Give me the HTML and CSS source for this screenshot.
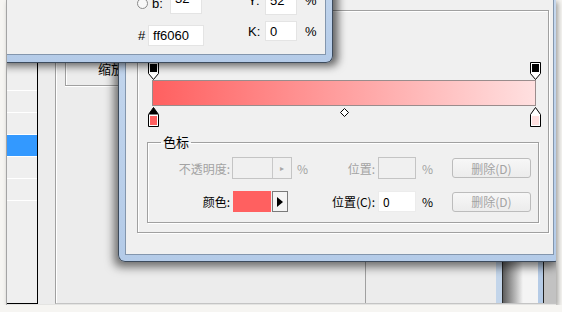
FILE: index.html
```html
<!DOCTYPE html>
<html lang="zh-CN">
<head>
  <meta charset="UTF-8">
  <title>渐变编辑器</title>
  <meta name="viewport" content="width=device-width, initial-scale=1">
  <link rel="stylesheet" href="styles.css">
</head>
<body>

<div class="shot">

  <!-- 后面的主窗口 -->
  <div class="app">
    <div class="list">
      <div class="row"></div>
      <div class="row"></div>
      <div class="row"></div>
      <div class="row selected"></div>
      <div class="row"></div>
      <div class="row"></div>
    </div>
    <div class="main">
      <div class="zoom-box">缩放</div>
      <div class="lower">
        <div class="pane-left"></div>
        <div class="pane-mid"></div>
        <div class="scroll"></div>
      </div>
    </div>
  </div>

  <!-- 渐变编辑器 -->
  <div class="dialog">
    <div class="client">
      <div class="panel">

        <div class="ramp">
          <div class="stops-top">
            <span class="stop" style="left: 0%">
              <svg width="11" height="18" viewBox="0 0 11 18"><path d="M0.5 0.5H10.5V11.5L5.5 17.5L0.5 11.5Z" fill="#fff" stroke="#000"/><rect x="2" y="2" width="7" height="8" fill="#000"/></svg>
            </span>
            <span class="stop" style="left: 100%">
              <svg width="11" height="18" viewBox="0 0 11 18"><path d="M0.5 0.5H10.5V11.5L5.5 17.5L0.5 11.5Z" fill="#fff" stroke="#000"/><rect x="2" y="2" width="7" height="8" fill="#000"/></svg>
            </span>
          </div>

          <div class="bar"></div>

          <div class="stops-bottom">
            <span class="stop" style="left: 0%">
              <svg width="11" height="20" viewBox="0 0 11 20"><path d="M5.5 0.5L10.5 7.5V19.5H0.5V7.5Z" fill="#fff" stroke="#000"/><path d="M5.5 0.5L10.5 7.5H0.5Z" fill="#000"/><rect x="2" y="9" width="7" height="9" fill="#ff6060"/></svg>
            </span>
            <span class="mid" style="left: 50%">
              <svg width="9" height="9" viewBox="0 0 9 9"><path d="M4.5 0.5L8.5 4.5L4.5 8.5L0.5 4.5Z" fill="#fff" stroke="#000"/></svg>
            </span>
            <span class="stop" style="left: 100%">
              <svg width="11" height="20" viewBox="0 0 11 20"><path d="M5.5 0.5L10.5 7.5V19.5H0.5V7.5Z" fill="#fff" stroke="#000"/><rect x="2" y="9" width="7" height="9" fill="#ffe0e0"/></svg>
            </span>
          </div>
        </div>

        <fieldset class="stops-group">
          <legend>色标</legend>
          <div class="fields">
            <span class="label off">不透明度:</span>
            <div class="spin">
              <span class="spin-field"></span>
              <span class="spin-btn">▸</span>
            </div>
            <span class="pct off">%</span>
            <span class="label off">位置:</span>
            <span class="box off"></span>
            <span class="pct off">%</span>
            <button class="btn" disabled>删除(D)</button>

            <span class="label">颜色:</span>
            <div class="color">
              <span class="swatch"></span>
              <span class="arrow">
                <svg width="6" height="10" viewBox="0 0 6 10"><path d="M0 0L6 5L0 10Z" fill="#000"/></svg>
              </span>
            </div>
            <span></span>
            <span class="label">位置(C):</span>
            <span class="box">0</span>
            <span class="pct">%</span>
            <button class="btn" disabled>删除(D)</button>
          </div>
        </fieldset>

      </div>
    </div>
  </div>

  <!-- 拾色器 -->
  <div class="picker">
    <div class="client">
      <div class="lab">
        <div class="lab-row top">
          <span class="radio"></span>
          <span class="lab-label">b:</span>
          <span class="field small">32</span>
        </div>
        <div class="lab-row">
          <span class="hash">#</span>
          <span class="field hex">ff6060</span>
        </div>
      </div>
      <div class="cmyk">
        <div class="cmyk-row top">
          <span class="cmyk-label">Y:</span>
          <span class="field small">52</span>
          <span class="cmyk-pct">%</span>
        </div>
        <div class="cmyk-row">
          <span class="cmyk-label">K:</span>
          <span class="field small">0</span>
          <span class="cmyk-pct">%</span>
        </div>
      </div>
    </div>
  </div>

</div>

</body>
</html>
```

FILE: styles.css
```css
* { box-sizing: border-box; margin: 0; padding: 0; }
body {
  font-family: "Noto Sans CJK SC", "Liberation Sans", sans-serif;
  font-size: 12px;
  color: #000;
  background: #f6f5f2;
  padding-left: 6px;
}

.shot {
  position: relative;
  width: 550px;
  height: 305px;
  overflow: hidden;
  border-left: 1px solid #a4a4a4;
  background: #e4e4e2;
  box-shadow: 2px 2px 5px rgba(0,0,0,0.35);
}

/* 主窗口 */
.app {
  position: absolute;
  top: 0; left: 0; right: 0; bottom: 1px;
  display: flex;
  background: #ececec;
}

.list {
  width: 31px;
  padding-top: 69px;
  background: #efefef;
  border-right: 1px solid #000;
  border-bottom: 1px solid #000;
}

.row {
  height: 22px;
  border-bottom: 1px solid #fff;
}

.row.selected {
  background: #3399ff;
}

.main {
  flex: 1;
  margin-left: 17px;
  display: flex;
  flex-direction: column;
  border-left: 1px solid #a0a0a0;
  border-bottom: 1px solid #c4c4c4;
  box-shadow: inset 1px 0 #fff;
}

.zoom-box {
  margin-left: 9px;
  width: 220px;
  height: 86px;
  padding: 61px 0 0 32px;
  font-size: 13px;
  line-height: 16px;
  border-left: 1px solid #a0a0a0;
  border-bottom: 1px solid #a0a0a0;
  box-shadow: inset 1px 0 #fff, 0 1px #fff;
}

.lower {
  flex: 1;
  display: flex;
}

.pane-left {
  width: 310px;
  border-right: 1px solid #a0a0a0;
}

.pane-mid {
  width: 130px;
}

.scroll {
  width: 60px;
  background: linear-gradient(to right,
    #c3d5ea 0 6px, #2a2a2a 6px 7px, #5e5e5e 7px, #bdbdbd 20px,
    #f4f4f4 27px 42px, #b5cbe6 42px 47px, #222 47px 48px, #c2c2c2 48px);
}

/* 渐变编辑器 */
.dialog {
  position: absolute;
  left: 111px;
  top: 0;
  width: 443px;
  height: 262px;
  padding: 0 6px 6px;
  border: 1px solid #3d4b5c;
  border-top: 0;
  border-radius: 0 0 7px 7px;
  background: linear-gradient(#c6d8ee, #b4cbe8);
  box-shadow: -4px 5px 10px rgba(0,0,0,0.55);
}

.dialog .client {
  height: 100%;
  padding: 10px 0 0 11px;
  background: #f0f0f0;
  border: 1px solid #8396ad;
  border-top: 0;
}

.panel {
  width: 412px;
  height: 223px;
  padding-top: 51px;
  border: 1px solid #a0a0a0;
  box-shadow: inset 1px 1px #fff, 1px 1px #fff;
}

.ramp {
  position: relative;
  margin-left: 14px;
  width: 384px;
  height: 64px;
  padding-top: 18px;
}

.bar {
  height: 26px;
  border: 1px solid #9a8c8c;
  background: linear-gradient(to right, #ff6060, #ffe0e0);
}

.stops-top,
.stops-bottom {
  position: absolute;
  left: 1px;
  right: 1px;
}

.stops-top { top: 0; height: 18px; }
.stops-bottom { top: 45px; height: 20px; }

.stop {
  position: absolute;
  top: 0;
  margin-left: -5px;
  display: block;
  line-height: 0;
}

.mid {
  position: absolute;
  top: 1px;
  margin-left: -4px;
  line-height: 0;
}

.stops-group {
  margin: 9px 0 0 9px;
  width: 392px;
  height: 88px;
  padding: 8px 0 0;
  border: 1px solid #a0a0a0;
  box-shadow: inset 1px 1px #fff, 1px 1px #fff;
}

.stops-group legend {
  margin-left: 13px;
  padding: 0 2px;
  font-size: 13px;
  line-height: 14px;
}

.fields {
  display: grid;
  grid-template-columns: 82px 62px 30px 53px 42px 35px 79px;
  grid-template-rows: 22px 21px;
  row-gap: 12px;
  align-items: center;
}

.label {
  text-align: right;
  white-space: nowrap;
}

.off {
  color: #a3a3a3;
}

.pct {
  padding-left: 5px;
}

.spin {
  margin-left: 2px;
  height: 22px;
  display: flex;
  border: 1px solid #c4c4c4;
  background: #f0f0f0;
}

.spin-field {
  flex: 1;
}

.spin-btn {
  width: 19px;
  border-left: 1px solid #c8c8c8;
  color: #a8a8a8;
  font-size: 8px;
  line-height: 20px;
  text-align: center;
}

.box {
  margin-left: 3px;
  width: 38px;
  height: 22px;
  padding-left: 4px;
  line-height: 20px;
  border: 1px solid #c4c4c4;
  background: #f0f0f0;
}

.fields .box:not(.off) {
  height: 21px;
  border-color: #ececec;
  background: #fff;
}

.color {
  margin-left: 3px;
  display: flex;
  height: 21px;
}

.swatch {
  width: 38px;
  background: #ff6060;
}

.arrow {
  width: 16px;
  margin-left: 1px;
  display: flex;
  align-items: center;
  justify-content: center;
  border: 1px solid #7a7a7a;
  background: #f4f4f4;
}

.btn {
  width: 79px;
  height: 20px;
  font-family: inherit;
  font-size: 12px;
  color: #a3a3a3;
  border: 1px solid #bcbcbc;
  border-radius: 3px;
  background: linear-gradient(#f7f7f7, #ececec);
}

/* 拾色器 */
.picker {
  position: absolute;
  left: -10px;
  top: -40px;
  width: 336px;
  height: 103px;
  padding: 0 6px 7px 0;
  border: 1px solid #3e4c5d;
  border-top: 0;
  border-radius: 0 0 7px 0;
  background: linear-gradient(#c6d8ee, #b4cbe8);
  box-shadow: 5px 3px 8px rgba(0,0,0,0.6);
}

.picker .client {
  height: 100%;
  display: flex;
  align-items: flex-end;
  background: #f0f0f0;
  border-right: 1px solid #8396ad;
  border-bottom: 1px solid #8396ad;
  font-family: "Liberation Sans", sans-serif;
  font-size: 13px;
}

.lab {
  margin: 0 0 8px 139px;
  display: flex;
  flex-direction: column;
  gap: 11px;
}

.lab-row,
.cmyk-row {
  display: flex;
  align-items: center;
}

.radio {
  width: 11px;
  height: 11px;
  border: 1px solid #8a8a8a;
  border-radius: 50%;
  background: #f8f8f8;
}

.lab-label {
  width: 18px;
  margin-left: 4px;
}

.hash {
  width: 11px;
  padding-left: 1px;
}

.field {
  height: 21px;
  padding-left: 4px;
  line-height: 19px;
  background: #fff;
  border: 1px solid #e4e4e4;
}

.top .field {
  line-height: 10px;
}

.field.small { width: 32px; }
.field.hex { width: 56px; }

.cmyk {
  margin: 0 0 13px 44px;
  display: flex;
  flex-direction: column;
  gap: 6px;
}

.cmyk .field {
  height: 20px;
}

.cmyk-row.top {
  align-items: flex-start;
}

.cmyk-row.top .cmyk-label,
.cmyk-row.top .cmyk-pct {
  line-height: 11px;
}

.cmyk-label {
  width: 17px;
}

.cmyk-pct {
  margin-left: 8px;
}
```
